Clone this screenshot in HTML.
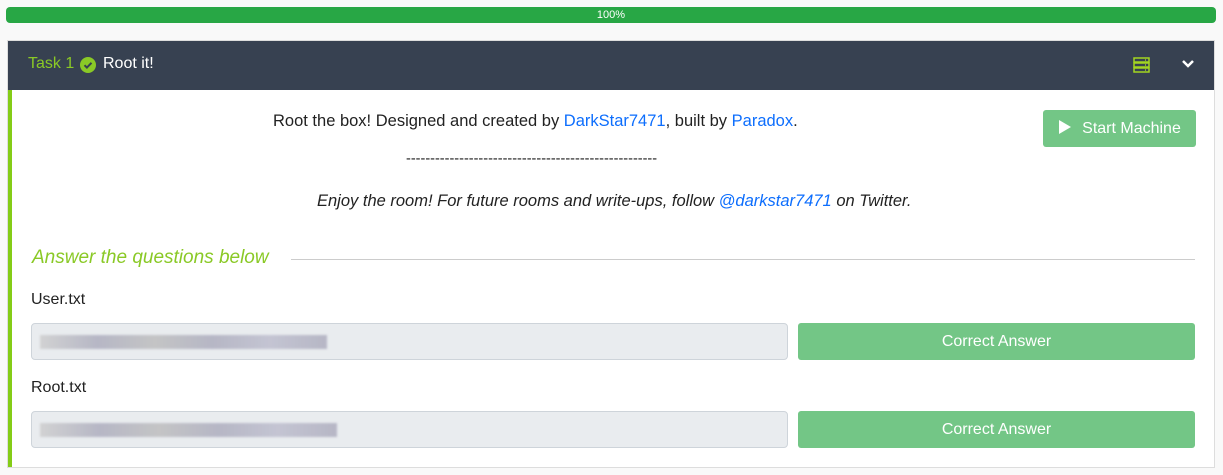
<!DOCTYPE html>
<html><head><style>
body{margin:0;background:#f9f9f9;font-family:"Liberation Sans",sans-serif;width:1223px;height:475px;overflow:hidden;position:relative}
.pb{position:absolute;left:6px;top:7px;width:1210px;height:16px;background:#28a745;border-radius:4px;color:#fff;font-size:11px;text-align:center;line-height:16px}
.card{position:absolute;left:7px;top:40px;width:1208px;height:428px;background:#fff;border:1px solid #ddd;box-sizing:border-box}
.hd{position:absolute;left:0;top:0;right:0;height:49px;background:#374151;}
.hd .t{position:absolute;left:20px;top:14px;font-size:16px;color:#8ac926}
.hd .n{position:absolute;left:95px;top:14px;font-size:16px;color:#fff}
.bar{position:absolute;left:0;top:49px;bottom:0;width:4px;background:#84cc16}
.txt{position:absolute;font-size:16.5px;color:#222;white-space:nowrap}
a{color:#0d6efd;text-decoration:none}
.btn{position:absolute;background:#73c686;color:#fff;border-radius:3px;font-size:16px;text-align:center}
.inp{position:absolute;left:23px;width:757px;height:37px;background:#e9ecef;border:1px solid #ced4da;border-radius:4px;box-sizing:border-box}
.blur{position:absolute;left:8px;top:11px;height:14px;background:linear-gradient(90deg,#ccc,#aab 20%,#bbb 40%,#aab 60%,#bbc 80%,#aab);opacity:.8;filter:blur(1px)}
.lbl{position:absolute;left:23px;font-size:16px;color:#222}
</style></head><body>
<div class="pb">100%</div>
<div class="card">
<div class="hd"><span class="t">Task 1</span>
<svg style="position:absolute;left:72px;top:16px" width="16" height="16" viewBox="0 0 16 16"><circle cx="8" cy="8" r="8" fill="#8ac926"/><path d="M4.5 8.2l2.4 2.4 4.6-4.8" stroke="#374151" stroke-width="2" fill="none"/></svg>
<span class="n">Root it!</span>
<svg style="position:absolute;left:1125px;top:16px" width="17" height="16" viewBox="0 0 17 16" fill="none" stroke="#a3d620" stroke-width="1.5"><rect x="1" y="1" width="15" height="4"/><rect x="1" y="6" width="15" height="4"/><rect x="1" y="11" width="15" height="4"/><path d="M12 3h1M12 8h1M12 13h1"/></svg>
<svg style="position:absolute;left:1173px;top:18px" width="14" height="10" viewBox="0 0 14 10"><path d="M2 2l5 5 5-5" stroke="#fff" stroke-width="2.5" fill="none"/></svg>
</div>
<div class="bar"></div>
<div class="txt" style="top:71px;left:265px">Root the box! Designed and created by <a>DarkStar7471</a>, built by <a>Paradox</a>.</div>
<div class="txt" style="top:110px;left:398px;font-size:14.5px">----------------------------------------------------</div>
<div class="txt" style="top:151px;left:309px;font-style:italic">Enjoy the room! For future rooms and write-ups, follow <a>@darkstar7471</a> on Twitter.</div>
<div class="btn" style="left:1035px;top:69px;width:153px;height:37px;line-height:37px"><svg width="14" height="16" viewBox="0 0 14 16" style="vertical-align:-2px;margin-right:10px"><path d="M1 1l12 7-12 7z" fill="#fff"/></svg>Start Machine</div>
<div style="position:absolute;left:24px;top:206px;font-size:19px;font-style:italic;color:#8ac926">Answer the questions below</div>
<div style="position:absolute;left:283px;top:218px;width:904px;height:1px;background:#ccc"></div>
<div class="lbl" style="top:250px">User.txt</div>
<div class="inp" style="top:282px"><div class="blur" style="width:287px"></div></div>
<div class="btn" style="left:790px;top:282px;width:397px;height:37px;line-height:37px">Correct Answer</div>
<div class="lbl" style="top:338px">Root.txt</div>
<div class="inp" style="top:370px"><div class="blur" style="width:297px"></div></div>
<div class="btn" style="left:790px;top:370px;width:397px;height:37px;line-height:37px">Correct Answer</div>
</div>
</body></html>
